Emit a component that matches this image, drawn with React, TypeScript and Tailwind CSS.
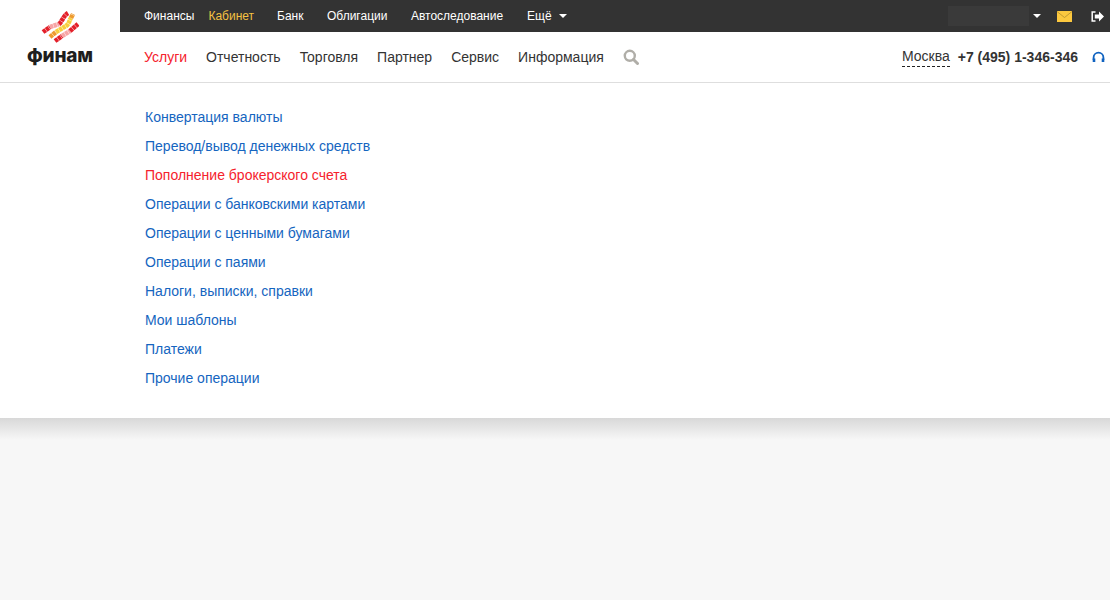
const topLinks = [
  { label: 'Финансы', className: 'ml-6 text-white' },
  { label: 'Кабинет', className: 'ml-[14px] text-[#f5c242]' },
  { label: 'Банк', className: 'ml-[23px] text-white' },
  { label: 'Облигации', className: 'ml-[23.5px] text-white' },
  { label: 'Автоследование', className: 'ml-[23.5px] text-white' },
  { label: 'Ещё', className: 'ml-6 text-white' },
];

const mainLinks = ['Отчетность', 'Торговля', 'Партнер', 'Сервис', 'Информация'];

const menuLinks = [
  'Конвертация валюты',
  'Перевод/вывод денежных средств',
  'Пополнение брокерского счета',
  'Операции с банковскими картами',
  'Операции с ценными бумагами',
  'Операции с паями',
  'Налоги, выписки, справки',
  'Мои шаблоны',
  'Платежи',
  'Прочие операции',
];

function Caret({ className }: { className: string }) {
  return (
    <svg className={className} width="8" height="4" viewBox="0 0 8 4">
      <path d="M0 0h8L4 4z" fill="#fff" />
    </svg>
  );
}

function Logo() {
  return (
    <svg width="38" height="36" viewBox="0 0 38 36">
      <g fill="none" strokeWidth="4.6" strokeDasharray="3.4 0.4">
        <path d="M2 22 L9 17" stroke="#e3202a" />
        <path d="M9 17 L18 14" stroke="#f7a5a5" />
        <path d="M18 14 C21 12 22 6 27 3" stroke="#e3202a" />
        <path d="M9 27 L15 22" stroke="#ee9a2e" />
        <path d="M15 22 L25 16 C28 14 28 11 30 8" stroke="#f8cf3e" />
        <path d="M30 8 L32 4" stroke="#ee9a2e" />
        <path d="M14 31 L21 26" stroke="#e3202a" />
        <path d="M21 26 L29 21" stroke="#f7a5a5" />
        <path d="M29 21 L37 14" stroke="#e3202a" />
      </g>
    </svg>
  );
}

export default function App() {
  return (
    <div className="min-h-[600px] bg-[#f7f7f7] font-['Liberation_Sans',Arial,sans-serif]">
      <div className="bg-white">
        {/* Header */}
        <div className="flex h-[83px] border-b border-[#dedede]">
          <div className="flex w-[120px] shrink-0 flex-col items-center pt-[10px]">
            <Logo />
            <span className="font-['Inter',sans-serif] text-[19px] leading-[20px] font-extrabold tracking-[-0.2px] text-[#1e1e1e]">
              финам
            </span>
          </div>

          <div className="min-w-0 flex-1">
            <div className="flex h-8 items-center bg-[#333333] text-xs">
              {topLinks.map((link) => (
                <span key={link.label} className={link.className}>
                  {link.label}
                </span>
              ))}
              <Caret className="ml-[7px]" />
              <div className="ml-auto h-5 w-[81px] bg-[#3a3a3a]" />
              <Caret className="ml-[4px]" />
              <svg className="ml-[16px]" width="15" height="11" viewBox="0 0 15 11">
                <path d="M0 0h15v11H0z" fill="#fcc83f" />
                <path d="M0 0.5l7.5 6 7.5-6" fill="none" stroke="#a8862a" strokeWidth="0.7" />
              </svg>
              <svg className="mr-[6px] ml-[19px]" width="13" height="11" viewBox="0 0 13 11">
                <path d="M4.5 1H1.2v9h3.3" fill="none" stroke="#fff" strokeWidth="1.5" />
                <path d="M3.8 3.4h4.2V0.6l5 4.9-5 4.9V7.6H3.8z" fill="#fff" />
              </svg>
            </div>

            <div className="flex h-[50px] items-center text-sm text-[#333333]">
              <span className="ml-6 text-[#f5222d]">Услуги</span>
              {mainLinks.map((label) => (
                <span key={label} className="ml-[19px]">
                  {label}
                </span>
              ))}
              <svg className="ml-[19px]" width="16" height="16" viewBox="0 0 16 16">
                <circle cx="6.8" cy="6.8" r="5" fill="none" stroke="#b0aea8" strokeWidth="2.4" />
                <path d="M10.5 10.5L14.5 14.5" stroke="#b0aea8" strokeWidth="3" strokeLinecap="round" />
              </svg>
              <span className="ml-auto border-b border-dashed border-[#222222] leading-[19px]">Москва</span>
              <span className="ml-2 font-bold">+7 (495) 1-346-346</span>
              <svg className="mr-[5px] ml-[14px]" width="13" height="12" viewBox="0 0 13 12">
                <path d="M1.6 9V6.5a4.9 4.9 0 0 1 9.8 0V9" fill="none" stroke="#0f62c0" strokeWidth="1.8" />
                <path d="M0.7 7.5h2.6v3.5H0.7zM9.7 7.5h2.6v3.5H9.7z" fill="#0f62c0" />
              </svg>
            </div>
          </div>
        </div>

        {/* Dropdown menu */}
        <div className="flex h-[335px] flex-col pt-5 pl-[145px] text-sm leading-[29px] text-[#1565c0]">
          {menuLinks.map((label) => (
            <span key={label} className={label === 'Пополнение брокерского счета' ? 'text-[#f5222d]' : ''}>
              {label}
            </span>
          ))}
        </div>
      </div>

      {/* Panel shadow */}
      <div className="h-[22px] bg-gradient-to-b from-[#d8d8d8] to-[#f7f7f7]" />
    </div>
  );
}
